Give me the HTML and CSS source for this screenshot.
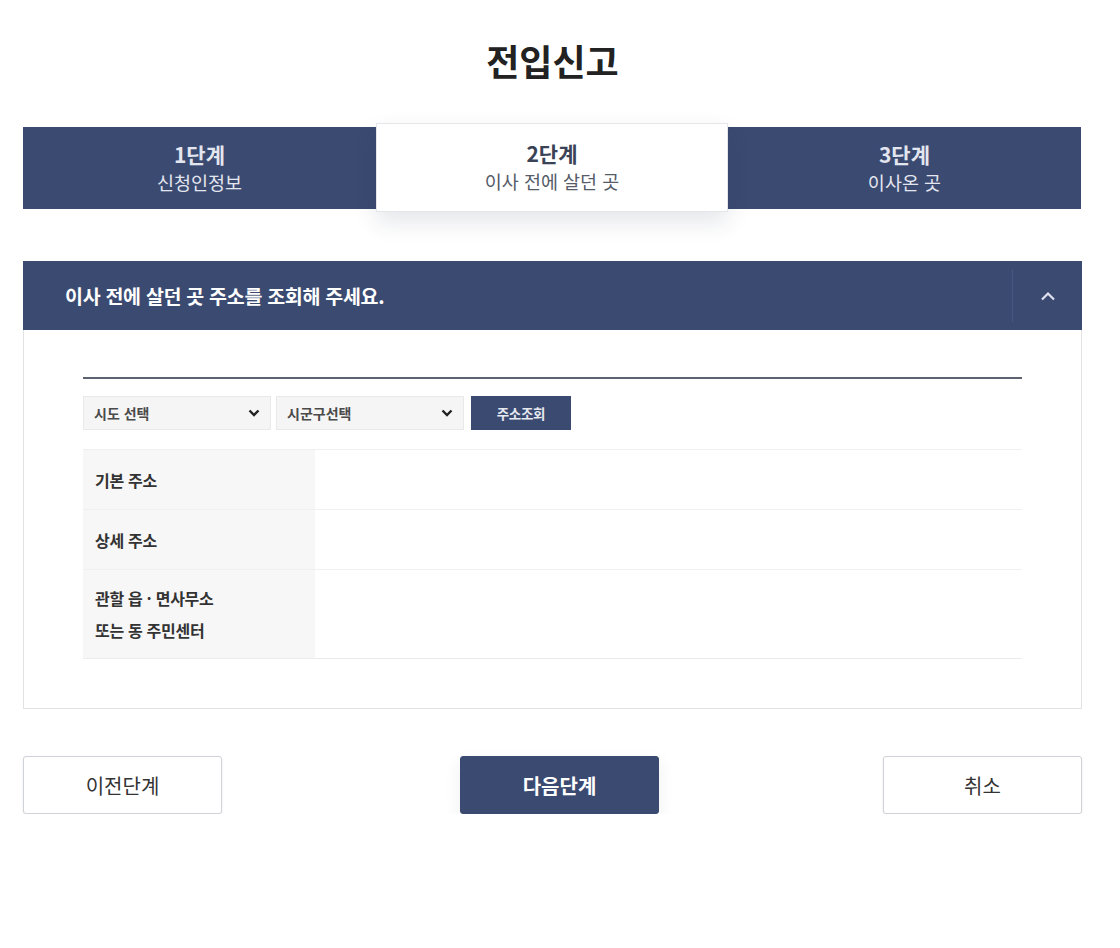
FILE: index.html
```html
<!DOCTYPE html>
<html lang="ko">
<head>
<meta charset="utf-8">
<title>전입신고</title>
<link rel="stylesheet" href="styles.css">
</head>
<body>
<div class="page">
  <h1 class="title">전입신고</h1>

  <ol class="steps">
    <li class="step">
      <strong class="step-num">1단계</strong>
      <span class="step-name">신청인정보</span>
    </li>
    <li class="step step-active">
      <strong class="step-num">2단계</strong>
      <span class="step-name">이사 전에 살던 곳</span>
    </li>
    <li class="step">
      <strong class="step-num">3단계</strong>
      <span class="step-name">이사온 곳</span>
    </li>
  </ol>

  <section class="panel">
    <div class="panel-head">
      <h2 class="panel-title">이사 전에 살던 곳 주소를 조회해 주세요.</h2>
      <button class="panel-toggle" type="button" aria-label="접기">
        <svg width="16" height="10" viewBox="0 0 16 10"><path d="M2 8.5 L8 2.5 L14 8.5" fill="none" stroke="#dfe3ee" stroke-width="2.2"/></svg>
      </button>
    </div>
    <div class="panel-body">
      <div class="rule"></div>
      <div class="search">
        <div class="select">
          <span>시도 선택</span>
          <svg width="12" height="8" viewBox="0 0 12 8"><path d="M1.5 1.5 L6 6 L10.5 1.5" fill="none" stroke="#222" stroke-width="2.4"/></svg>
        </div>
        <div class="select">
          <span>시군구선택</span>
          <svg width="12" height="8" viewBox="0 0 12 8"><path d="M1.5 1.5 L6 6 L10.5 1.5" fill="none" stroke="#222" stroke-width="2.4"/></svg>
        </div>
        <button class="search-btn" type="button">주소조회</button>
      </div>
      <div class="info">
        <div class="row">
          <div class="label">기본 주소</div>
          <div class="value"></div>
        </div>
        <div class="row">
          <div class="label">상세 주소</div>
          <div class="value"></div>
        </div>
        <div class="row row-tall">
          <div class="label">관할 읍 · 면사무소<br>또는 동 주민센터</div>
          <div class="value"></div>
        </div>
      </div>
    </div>
  </section>

  <div class="actions">
    <button class="btn" type="button">이전단계</button>
    <button class="btn btn-primary" type="button">다음단계</button>
    <button class="btn" type="button">취소</button>
  </div>
</div>
</body>
</html>
```

FILE: styles.css
```css
* { box-sizing: border-box; }

html, body {
  margin: 0;
  padding: 0;
  background: #ffffff;
}

body {
  font-family: "Noto Sans CJK KR", "Noto Sans", sans-serif;
  color: #222;
}

.page {
  width: 1059px;
  margin-left: 23px;
  padding-top: 36px;
}

.title {
  margin: 0;
  height: 48px;
  line-height: 48px;
  text-align: center;
  font-size: 36px;
  font-weight: 700;
  color: #222;
}

.steps {
  list-style: none;
  margin: 43px 1px 0 0;
  padding: 0;
  display: flex;
  height: 82px;
  background: #3b4a71;
}

.step {
  flex: 1;
  display: flex;
  flex-direction: column;
  align-items: center;
  justify-content: center;
  color: #e3e6ee;
}

.step-num {
  font-size: 21px;
  font-weight: 700;
  line-height: 28px;
}

.step-name {
  font-size: 18.5px;
  line-height: 29px;
}

.step-active {
  flex: 0 0 352px;
  background: #ffffff;
  margin: -4px 0 -3px 0;
  border: 1px solid #e4e6ea;
  box-shadow: 0 10px 22px rgba(40, 50, 80, 0.12);
  position: relative;
  z-index: 1;
}

.step-active .step-num { color: #3a4256; }
.step-active .step-name { color: #555b68; }

.panel {
  margin-top: 52px;
}

.panel-head {
  display: flex;
  align-items: stretch;
  height: 69px;
  background: #3b4a71;
}

.panel-title {
  flex: 1;
  margin: 0;
  padding-left: 42px;
  display: flex;
  align-items: center;
  font-size: 19.5px;
  font-weight: 700;
  color: #ffffff;
  letter-spacing: -0.3px;
}

.panel-toggle {
  width: 70px;
  border: 0;
  border-left: 1px solid #485782;
  margin: 8px 0;
  background: transparent;
  display: flex;
  align-items: center;
  justify-content: center;
  padding: 0;
}

.panel-body {
  border: 1px solid #e2e2e2;
  border-top: 0;
  padding: 47px 59px 49px 59px;
}

.rule {
  border-top: 2px solid #5d6370;
}

.search {
  display: flex;
  margin-top: 17px;
  gap: 5px;
}

.select {
  width: 188px;
  height: 34px;
  background: #f5f5f5;
  border: 1px solid #e9e9e9;
  display: flex;
  align-items: center;
  justify-content: space-between;
  padding: 0 10px 0 10px;
  font-size: 14px;
  font-weight: 700;
  color: #4a4a4a;
}

.search-btn {
  margin-left: 2px;
  width: 100px;
  height: 34px;
  border: 0;
  background: #3b4a71;
  color: #e6e9f0;
  font-family: inherit;
  font-size: 13.5px;
  font-weight: 700;
  letter-spacing: -0.3px;
}

.info {
  margin-top: 19px;
}

.row {
  display: flex;
  height: 60px;
  border-top: 1px solid #f0f0f0;
}

.row:last-child {
  border-bottom: 1px solid #ececec;
}

.row-tall {
  height: 90px;
}

.label {
  width: 232px;
  background: #f7f7f7;
  display: flex;
  align-items: center;
  padding-left: 12px;
  font-size: 16px;
  font-weight: 700;
  color: #333;
  line-height: 32px;
  letter-spacing: -0.3px;
}

.value {
  flex: 1;
}

.actions {
  margin-top: 47px;
  display: flex;
  justify-content: space-between;
}

.btn {
  width: 199px;
  height: 58px;
  background: #ffffff;
  border: 1px solid #cfd2d6;
  border-radius: 3px;
  box-shadow: 0 1px 3px rgba(0, 0, 0, 0.08);
  font-family: inherit;
  font-size: 20px;
  color: #333;
}

.btn-primary {
  margin-left: 14px;
  background: #3b4a71;
  border-color: #3b4a71;
  color: #ffffff;
  font-weight: 700;
  box-shadow: 0 6px 16px rgba(40, 50, 80, 0.08);
}
```
